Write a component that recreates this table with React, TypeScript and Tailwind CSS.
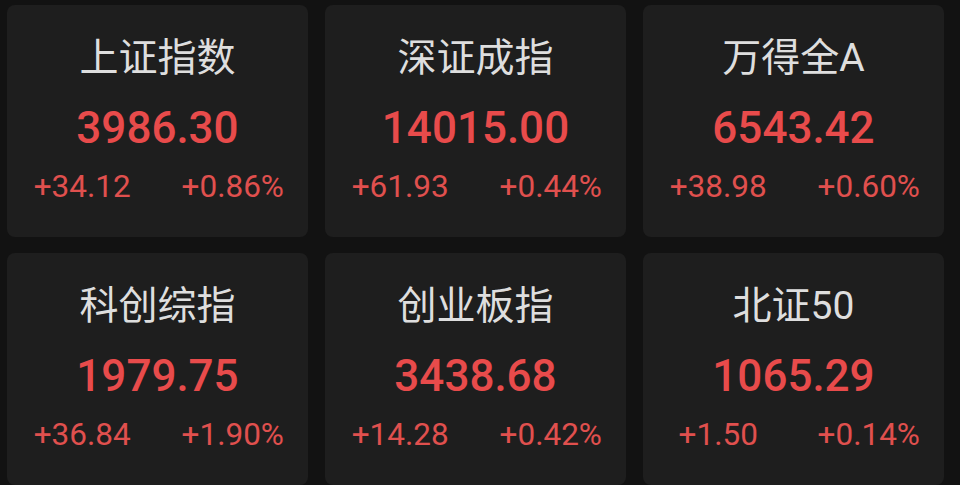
const indices = [
  { name: "上证指数", price: "3986.30", change: "+34.12", pct: "+0.86%" },
  { name: "深证成指", price: "14015.00", change: "+61.93", pct: "+0.44%" },
  { name: "万得全A", price: "6543.42", change: "+38.98", pct: "+0.60%" },
  { name: "科创综指", price: "1979.75", change: "+36.84", pct: "+1.90%" },
  { name: "创业板指", price: "3438.68", change: "+14.28", pct: "+0.42%" },
  { name: "北证50", price: "1065.29", change: "+1.50", pct: "+0.14%" },
];

const IndexCard = ({ name, price, change, pct }: (typeof indices)[number]) => (
  <div className="flex flex-col items-center h-[232px] rounded-[8px] bg-[#1e1e1e]">
    <div className="mt-[34px] text-[39px] leading-[39px] text-[#dedede] font-['Roboto','Noto_Sans_CJK_SC',sans-serif]">
      {name}
    </div>
    <div className="mt-[28px] text-[44px] leading-[44px] font-medium text-[#e84b4b] font-['Roboto',sans-serif]">
      {price}
    </div>
    <div className="mt-[21px] grid grid-cols-2 w-full text-[31.5px] leading-[32px] text-[#e0504e] font-['Roboto',sans-serif]">
      <span className="text-center">{change}</span>
      <span className="text-center">{pct}</span>
    </div>
  </div>
);

export default function App() {
  return (
    <div className="w-[960px] h-[485px] overflow-hidden bg-[#121212] pl-[7px] pt-[5px]">
      <div className="grid grid-cols-[301px_301px_301px] gap-x-[17px] gap-y-[16px]">
        {indices.map((idx) => (
          <IndexCard key={idx.name} {...idx} />
        ))}
      </div>
    </div>
  );
}
